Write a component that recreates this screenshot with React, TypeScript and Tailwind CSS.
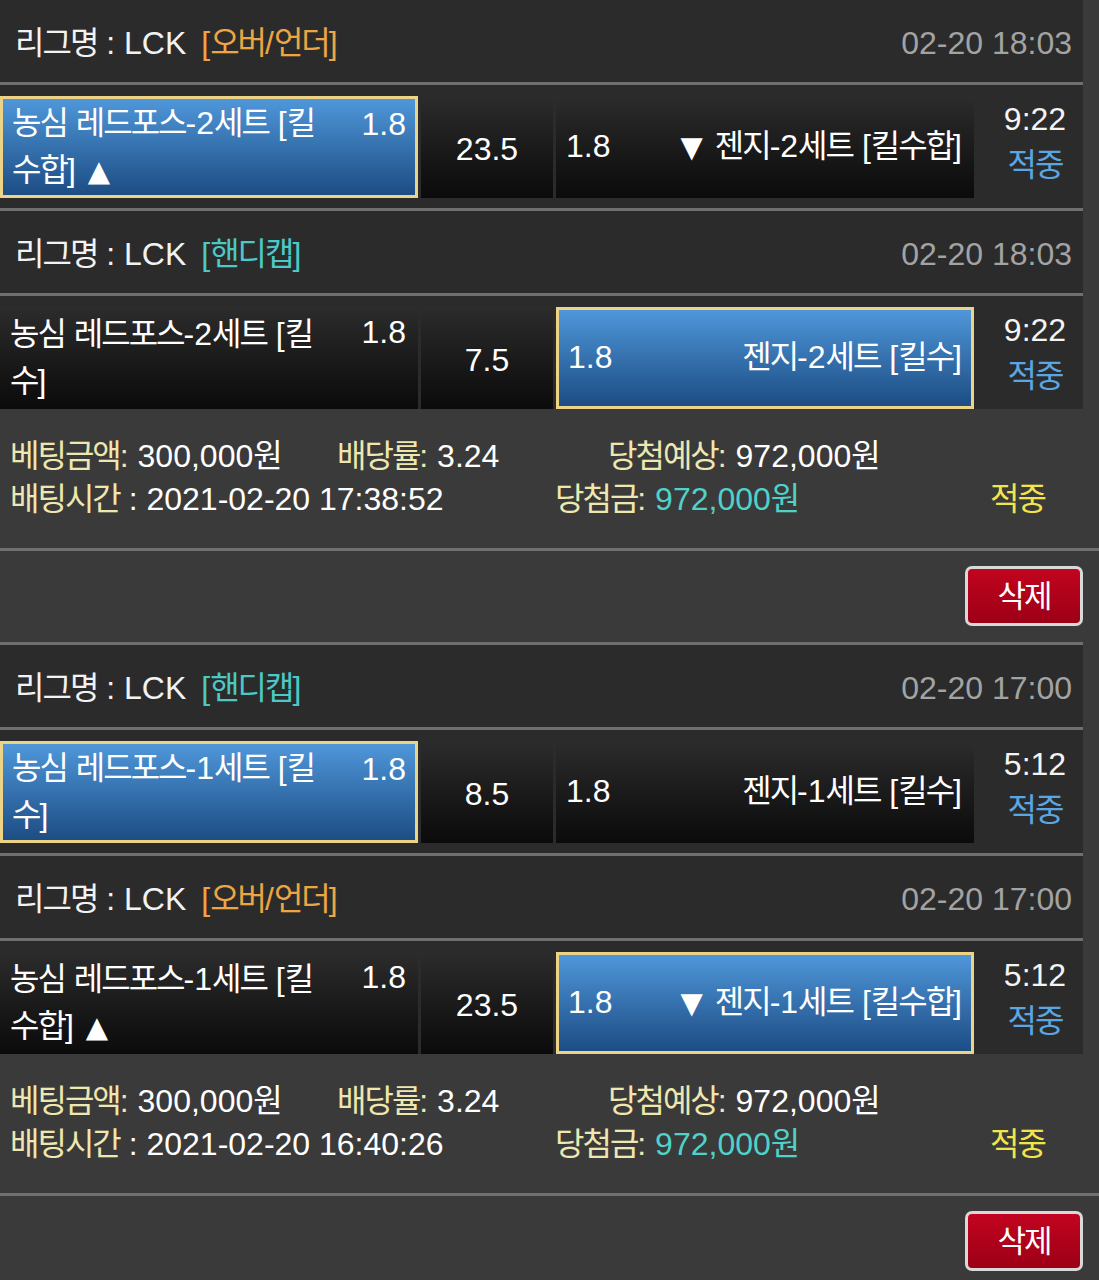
import React from "react";

type Leg = {
  tag: "ou" | "hc";
  date: string;
  home: string[];
  homeSel?: boolean;
  line: string;
  away: string;
  awaySel?: boolean;
  time: string;
};

type Slip = {
  legs: Leg[];
  placedAt: string;
};

const slips: Slip[] = [
  {
    placedAt: "2021-02-20 17:38:52",
    legs: [
      {
        tag: "ou",
        date: "02-20 18:03",
        home: ["농심 레드포스-2세트 [킬", "수합] ▲"],
        homeSel: true,
        line: "23.5",
        away: "▼ 젠지-2세트 [킬수합]",
        time: "9:22",
      },
      {
        tag: "hc",
        date: "02-20 18:03",
        home: ["농심 레드포스-2세트 [킬", "수]"],
        line: "7.5",
        away: "젠지-2세트 [킬수]",
        awaySel: true,
        time: "9:22",
      },
    ],
  },
  {
    placedAt: "2021-02-20 16:40:26",
    legs: [
      {
        tag: "hc",
        date: "02-20 17:00",
        home: ["농심 레드포스-1세트 [킬", "수]"],
        homeSel: true,
        line: "8.5",
        away: "젠지-1세트 [킬수]",
        time: "5:12",
      },
      {
        tag: "ou",
        date: "02-20 17:00",
        home: ["농심 레드포스-1세트 [킬", "수합] ▲"],
        line: "23.5",
        away: "▼ 젠지-1세트 [킬수합]",
        awaySel: true,
        time: "5:12",
      },
    ],
  },
];

// hangul runs get tighter tracking so widths come close to the phone font
function Ko({ text }: { text: string }) {
  const parts = text.split(/([\uAC00-\uD7A3]+|[▲▼])/);
  return (
    <>
      {parts.map((p, i) =>
        /[\uAC00-\uD7A3]/.test(p) ? (
          <span key={i} className="tracking-[-2px]">
            {p}
          </span>
        ) : /[▲▼]/.test(p) ? (
          <span key={i} className="px-[3px] font-['DejaVu_Sans'] text-[29px]">
            {p}
          </span>
        ) : (
          p
        )
      )}
    </>
  );
}

const cellBase = "h-[102px] flex";
const selCell =
  "border-[3px] border-[#ecd385] bg-gradient-to-b from-[#4f97da] to-[#1d4d84]";
const darkCell = "bg-gradient-to-b from-[#2c2c2c] to-[#0b0b0b]";

function Header({ leg }: { leg: Leg }) {
  return (
    <div className="flex h-[82px] items-center justify-between pl-[15px] pr-[11px] pt-[4px]">
      <div className="text-[#f2f2f2]">
        <Ko text="리그명" /> : LCK
        {leg.tag === "ou" ? (
          <span className="ml-[15px] text-[#eea543]">
            <Ko text="[오버/언더]" />
          </span>
        ) : (
          <span className="ml-[15px] text-[#4cc9c6]">
            <Ko text="[핸디캡]" />
          </span>
        )}
      </div>
      <div className="text-[#a3a3a3]">{leg.date}</div>
    </div>
  );
}

function Row({ leg, last }: { leg: Leg; last?: boolean }) {
  return (
    <div className={`flex gap-[3px] pt-[11px] ${last ? "" : "pb-[10px]"}`}>
      <div
        className={`${cellBase} w-[418px] items-center justify-between ${
          leg.homeSel ? `${selCell} pl-[9px] pr-[9px]` : `${darkCell} pl-[10px] pr-[12px]`
        }`}
      >
        <div className="leading-[47px] text-white">
          {leg.home.map((l) => (
            <div key={l}>
              <Ko text={l} />
            </div>
          ))}
        </div>
        <div className="self-start pt-[2px] leading-[47px] text-white">1.8</div>
      </div>
      <div
        className={`${cellBase} ${darkCell} w-[132px] items-center justify-center pt-[4px] text-white`}
      >
        {leg.line}
      </div>
      <div
        className={`${cellBase} w-[418px] items-center justify-between pb-[3px] text-white ${
          leg.awaySel ? `${selCell} pl-[9px] pr-[9px]` : `${darkCell} pl-[10px] pr-[12px]`
        }`}
      >
        <span>1.8</span>
        <span>
          <Ko text={leg.away} />
        </span>
      </div>
      <div className="flex h-[102px] w-[106px] flex-col items-center justify-center pb-[10px] pl-[10px] leading-[46px]">
        <span className="text-[#f4f4f4]">{leg.time}</span>
        <span className="text-[#5ba6e1]">
          <Ko text="적중" />
        </span>
      </div>
    </div>
  );
}

function SlipBlock({ slip, first }: { slip: Slip; first?: boolean }) {
  const [a, b] = slip.legs;
  return (
    <section>
      {!first && <div className="h-[3px] w-[1083px] bg-[#6f6f6f]" />}
      <div className="w-[1083px] bg-[#2b2b2b]">
        <Header leg={a} />
        <div className="h-[3px] bg-[#6f6f6f]" />
        <Row leg={a} />
        <div className="h-[3px] bg-[#6f6f6f]" />
        <Header leg={b} />
        <div className="h-[3px] bg-[#6f6f6f]" />
        <Row leg={b} last />
      </div>

      <div className="h-[139px] pl-[10px] pt-[26px] leading-[43px]">
        <div className="flex">
          <span className="w-[327px]">
            <span className="text-[#efe7b0]">
              <Ko text="베팅금액" />:
            </span>
            <span className="text-white">
              {" "}
              300,000<Ko text="원" />
            </span>
          </span>
          <span className="w-[271px]">
            <span className="text-[#efe7b0]">
              <Ko text="배당률" />:
            </span>
            <span className="text-white"> 3.24</span>
          </span>
          <span>
            <span className="text-[#efe7b0]">
              <Ko text="당첨예상" />:
            </span>
            <span className="text-white">
              {" "}
              972,000<Ko text="원" />
            </span>
          </span>
        </div>
        <div className="flex">
          <span className="w-[545px]">
            <span className="text-[#efe7b0]">
              <Ko text="배팅시간" />
            </span>
            <span className="text-white"> : {slip.placedAt}</span>
          </span>
          <span className="w-[435px]">
            <span className="text-[#efe7b0]">
              <Ko text="당첨금" />:
            </span>
            <span className="text-[#4fd2c9]">
              {" "}
              972,000<Ko text="원" />
            </span>
          </span>
          <span className="text-[#f3e44c]">
            <Ko text="적중" />
          </span>
        </div>
      </div>

      <div className="h-[3px] bg-[#6f6f6f]" />

      <div className="flex h-[91px] justify-end pr-[16px] pt-[15px]">
        <button className="flex h-[60px] w-[118px] items-center justify-center rounded-[7px] border-[3px] border-[#d9d9d9] bg-gradient-to-b from-[#c2041f] to-[#9c0016] text-[31px] text-white">
          <Ko text="삭제" />
        </button>
      </div>
    </section>
  );
}

export default function App() {
  return (
    <div className="min-h-[1280px] w-[1099px] bg-[#3a3a3a] font-['Liberation_Sans','Noto_Sans_CJK_KR',sans-serif] text-[32px] leading-none">
      {slips.map((s, i) => (
        <SlipBlock key={s.placedAt} slip={s} first={i === 0} />
      ))}
    </div>
  );
}
